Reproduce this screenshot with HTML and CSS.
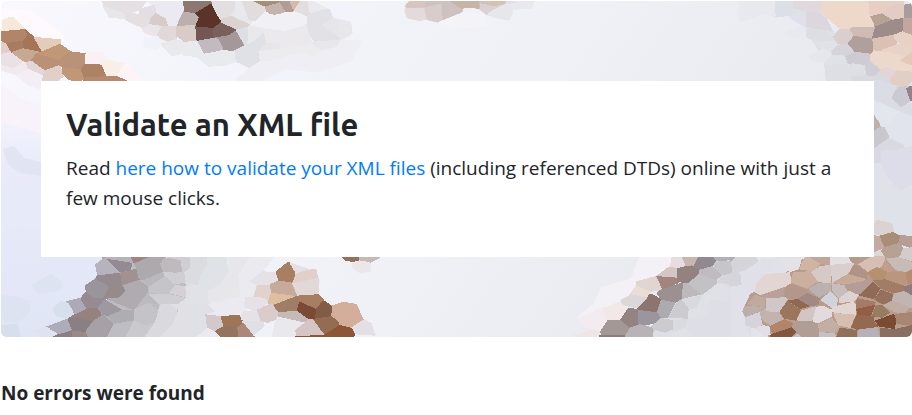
FILE: index.html
```html
<!DOCTYPE html>
<html lang="en">
<head>
<meta charset="utf-8">
<meta name="viewport" content="width=device-width, initial-scale=1">
<title>Validate an XML file</title>
<link rel="stylesheet" href="styles.css">
</head>
<body>
<main class="page">
<section class="hero">
<svg class="hero-art" viewBox="1 1 911 336" preserveAspectRatio="xMidYMid slice" aria-hidden="true">
<defs>
<linearGradient id="base" x1="0" y1="0" x2="1" y2="0.25">
<stop offset="0" stop-color="#f8f8fd"/><stop offset="0.3" stop-color="#f3f4fb"/><stop offset="0.6" stop-color="#f0f1f6"/><stop offset="0.9" stop-color="#e9eaef"/><stop offset="1" stop-color="#e3e4eb"/>
</linearGradient>
<linearGradient id="left" x1="0" y1="0" x2="0" y2="1">
<stop offset="0" stop-color="#f6f6fd"/><stop offset="0.3" stop-color="#e9ebfa"/><stop offset="1" stop-color="#e0e5f5"/>
</linearGradient>
<!-- Repeats every cell one pixel outwards so that neighbours meet without seams -->
<filter id="seams" x="0" y="0" width="1" height="1" color-interpolation-filters="sRGB">
<feOffset in="SourceGraphic" dx="1" dy="0" result="right"/>
<feOffset in="SourceGraphic" dx="-1" dy="0" result="leftward"/>
<feOffset in="SourceGraphic" dx="0" dy="1" result="down"/>
<feMerge><feMergeNode in="leftward"/><feMergeNode in="right"/><feMergeNode in="down"/><feMergeNode in="SourceGraphic"/></feMerge>
</filter>
</defs>
<rect x="0" y="0" width="914" height="338" fill="url(#base)"/>
<path fill="url(#left)" d="M0 95 45 105 120 257 70 338H0Z"/>
<path fill="#fdf9fc" d="M1 8 30 10 65 36 60 48 35 36 12 17 1 22Z"/>
<path fill="#f8f2fa" d="M1 85 20 98 41 108V134L1 122Z"/>
<path fill="#e1e4f2" d="M3 149 14 146 24 158 41 162V176L20 173 8 165Z"/>
<path fill="#e7eaf8" d="M1 195 20 185 41 194V230L14 224 1 235Z"/>
<g filter="url(#seams)" shape-rendering="crispEdges">
<g transform="scale(.3333)">
<path fill="#f7e8da" d="M9 60 35 50 75 87 9 92Z"/>
<path fill="#b08569" d="M3 94 75 87 82 105 70 122 18 129 3 120Z"/>
<path fill="#a87c61" d="M18 129 70 122 68 145 35 156Z"/>
<path fill="#a57559" d="M75 88 101 112 125 154 104 157 69 144 70 122 82 105Z"/>
<path fill="#e4ccba" d="M101 111 181 118 180 130 125 154Z"/>
<path fill="#e2cec7" d="M3 125 18 129 30 155 3 162Z"/>
<path fill="#c7a893" d="M35 156 69 145 120 155 92 181 76 185Z"/>
<path fill="#c09875" d="M125 154 179 132 210 154 176 180 106 160Z"/>
<path fill="#ba9177" d="M92 181 108 160 176 180 182 196 136 208Z"/>
<path fill="#b99378" d="M176 180 210 154 255 160 254 192 240 207 188 202Z"/>
<path fill="#c19877" d="M188 202 240 207 254 235 235 243 205 237 187 220Z"/>
<path fill="#ae8265" d="M252 193 300 193 320 228 295 243H254L243 208Z"/>
<path fill="#b48b72" d="M256 232 348 227 386 243H254Z"/>
<path fill="#f8efe7" d="M303 185 317 180 377 190 349 227 320 229Z"/>
<path fill="#fbf1f4" d="M255 162 298 155 315 167 318 180 300 193H255Z"/>
<path fill="#fcf4f6" d="M375 192 430 243H386L350 227Z"/>
<path fill="#e9e1e5" d="M3 162 31 155 71 185 38 205 3 191Z"/>
<path fill="#f0e9ef" d="M3 192 38 205 71 185 83 190 77 220 50 223 3 209Z"/>
<path fill="#e2d6d9" d="M77 187 94 182 133 210 125 223 84 205Z"/>
<path fill="#e1d0ca" d="M132 212 178 195 188 230 170 243H128Z"/>
<path fill="#f3edf5" d="M50 225 85 207 125 224 123 265 87 255Z"/>
<path fill="#e3dfe3" d="M310 3H383L392 13 371 39 325 33 311 15Z"/>
<path fill="#e6e6eb" d="M310 18 371 39 390 50 380 55 328 50Z"/>
<path fill="#e6e0e5" d="M383 3H438L421 27 390 38 371 39 392 13Z"/>
<path fill="#e5dfe0" d="M371 39 390 38 419 43 450 56 447 72 430 83 380 60Z"/>
<path fill="#e3dee3" d="M421 27 464 14 470 40 450 54 419 43Z"/>
<path fill="#d8ccca" d="M468 39 498 56 503 74 484 78 447 72 451 54Z"/>
<path fill="#ebe9f1" d="M440 3H548L550 34 530 76 503 74 498 56 470 40 464 14Z"/>
<path fill="#e9e5ea" d="M427 84 447 72 485 78 471 108 434 98Z"/>
<path fill="#e1d8d8" d="M485 78 529 77 528 120 505 124 470 108Z"/>
<path fill="#d9cbc7" d="M529 77 584 76 587 122 551 122 527 105Z"/>
<path fill="#bbb0ad" d="M550 34 584 40 597 53 590 76 530 76Z"/>
<path fill="#8f7771" d="M549 3H631L634 12 584 40 553 32Z"/>
<path fill="#5b3429" d="M631 12 662 67 640 84 586 79 597 50 584 40Z"/>
<path fill="#745752" d="M586 79 640 84 638 113 590 122Z"/>
<path fill="#7a605a" d="M662 66 708 89 685 106 638 114 640 84Z"/>
<path fill="#c3babf" d="M594 122 638 114 655 116 671 148 611 158Z"/>
<path fill="#a49998" d="M638 114 685 106 708 91 735 138 699 152 671 148 655 116Z"/>
<path fill="#e3dee0" d="M635 3H725L693 44 662 58 650 40Z"/>
<path fill="#dbd2d2" d="M662 58 693 46 750 74 743 82 703 86 664 68Z"/>
<path fill="#e7e8ec" d="M724 6 745 35 750 72 693 44Z"/>
<path fill="#e2dedf" d="M726 3H765L780 15V38L745 34Z"/>
<path fill="#e7e7ea" d="M745 36 780 39V77L750 72ZM743 85 780 79V140H735Z"/>
<path fill="#dddee3" d="M708 89 743 82 742 138 735 140Z"/>
<path fill="#dfe1e5" d="M702 151 737 139 780 150V180L750 202 711 182Z"/>
<path fill="#e9eaee" d="M541 152 565 122H591L610 158 600 168 550 165ZM590 168 671 149 704 155 706 184 670 195 625 197Z"/>
<path fill="#f0f2fb" d="M435 115 475 108 488 125 470 147 433 140Z"/>
<path fill="#e8e8ed" d="M481 131 527 118 555 126 541 162 515 165Z"/>
</g>

<g transform="translate(235 0) scale(.3333)">
<path fill="#eeeef4" d="M65 185 190 155 260 150 320 118 378 122 350 180 250 215 150 205 75 243H0L47 202Z"/>
<path fill="#f0f0f5" d="M45 75 65 45 90 35 145 43 182 33 214 48V72L150 92 84 85Z"/>
<path fill="#e7e9ed" d="M0 3H20L40 60 0 52Z"/>
<path fill="#e2dddd" d="M20 3H55L90 20 88 38 60 64 40 58Z"/>
<path fill="#dbd2d2" d="M0 55 45 75 37 82 0 87Z"/>
<path fill="#e9e9ed" d="M45 75 84 85V100L60 122 33 140 40 78Z"/>
<path fill="#dedfe4" d="M2 90 40 79 37 135 30 140Z"/>
<path fill="#dfe1e6" d="M0 150 60 122 84 98 95 130 68 155 73 185 47 202 6 184Z"/>
<path fill="#aa8c77" d="M53 3H137L134 8 90 20Z"/>
<path fill="#c3b5ae" d="M90 20 134 7 150 33 120 45 100 40Z"/>
<path fill="#b39c94" d="M134 5 165 3 174 33 150 34Z"/>
<path fill="#d5b8a5" d="M163 3H195L180 24 172 25Z"/>
<path fill="#e3dedd" d="M195 3H217L225 43 216 46 175 33Z"/>
<path fill="#e9e9ee" d="M217 3H230L277 26 225 40Z"/>
<path fill="#e1e1e6" d="M225 40 280 25 293 55 258 75 320 117 240 125 216 93V48Z"/>
<path fill="#e5e5ea" d="M258 75 293 53 311 66 305 102Z"/>
<path fill="#e8e7ec" d="M293 54 345 65 350 100 320 117 305 102 311 66Z"/>
<path fill="#e7e7ec" d="M240 125 318 118 307 140 265 150 230 130Z"/>
<path fill="#ebe9eb" d="M84 85 150 93 214 75 228 125 225 135 140 150 135 128 95 130Z"/>
<path fill="#e7e6eb" d="M70 153 95 130 135 127 139 151Z"/>
<path fill="#ecebf0" d="M70 154 225 135 262 150 235 170 190 157 110 182 75 185Z"/>
</g>

<g transform="translate(370 0) scale(.3333)">
<path fill="#d7c5c2" d="M120 3H170L163 22 104 22Z"/>
<path fill="#e3dbdb" d="M107 25 162 23 170 57 145 60 110 52Z"/>
<path fill="#d9cdcb" d="M162 23 215 10 217 57 203 65 170 57Z"/>
<path fill="#cfc1bf" d="M170 3H240L276 28 274 35 217 58 215 10 163 22Z"/>
<path fill="#c8b4a7" d="M240 3H327L329 23 284 21 275 25Z"/>
<path fill="#d6c1b5" d="M327 3H407L403 12 369 18 335 9Z"/>
<path fill="#d9d1d2" d="M328 9 369 18 399 15 367 30 350 42 328 25Z"/>
<path fill="#e7e6eb" d="M403 12 427 22 425 42 416 59 370 50 350 42 369 29Z"/>
<path fill="#dedee3" d="M407 3H440L443 9 412 8Z"/>
<path fill="#e9e8ee" d="M427 3H490L485 23 430 27 405 12 443 9Z"/>
<path fill="#f3f3f8" d="M211 65 276 37 343 43 350 78 245 83Z"/>
</g>

<g transform="translate(740 0) scale(.3333)">
<path fill="#dfdfe6" d="M158 24 247 37 300 136 320 165 332 243H260L255 185 196 78 150 50Z"/>
<path fill="#e7e9ee" d="M0 3H105V48L70 40 0 65ZM130 100 190 78 200 95 163 112Z"/>
<path fill="#dddfe6" d="M105 3H158L171 35 150 44 107 50Z"/>
<path fill="#e0d8dd" d="M158 3H247L240 37 197 34 158 24Z"/>
<path fill="#e0e0eb" d="M150 50 170 35 197 44 196 78 172 67Z"/>
<path fill="#dcd7de" d="M197 34 240 37 256 54 275 92 235 90 197 80Z"/>
<path fill="#dcdee4" d="M197 87 240 88 277 109 279 122 235 124 203 112Z"/>
<path fill="#dfe2e7" d="M234 127 280 121 300 136 272 156 250 147Z"/>
<path fill="#e6e7ed" d="M208 165 250 147 272 156 275 165 255 187 215 180Z"/>
<path fill="#edd8c9" d="M246 3H385L397 44 403 78 328 86 306 88 240 35Z"/>
<path fill="#dacfcf" d="M277 110 302 87 328 86 340 98 337 112 325 130 293 132Z"/>
<path fill="#d7d3da" d="M274 154 293 134 325 133 341 157 315 167 275 164Z"/>
<path fill="#cfbbb4" d="M328 86 340 80 402 82 397 115 341 107Z"/>
<path fill="#afa09b" d="M324 129 342 107 397 116 400 152 390 161 345 154Z"/>
<path fill="#b8a294" d="M391 49 425 40 455 58 447 69 405 80Z"/>
<path fill="#e9cfc3" d="M385 3H490V11L426 37 389 45Z"/>
<path fill="#e2ccc3" d="M426 38 455 15 490 10V54L457 58Z"/>
<path fill="#9d8c8a" d="M405 80 455 60 490 54V90L460 103 396 115Z"/>
<path fill="#aa9b9c" d="M491 15 516 10V54H491Z"/>
<path fill="#c3a69e" d="M490 55H516V103L490 92Z"/>
<path fill="#dbc1b4" d="M397 116 460 104 469 132 422 150 400 151Z"/>
<path fill="#e8d1c5" d="M460 105 486 94 516 105V139L482 130 462 115Z"/>
<path fill="#e9d2c8" d="M421 150 480 131 516 140V157L495 168 455 158Z"/>
<path fill="#edd9cb" d="M388 166 401 151 454 158 498 170 482 184 516 197V215L470 211 434 200 415 207 389 180Z"/>
<path fill="#e4c9ba" d="M478 182 516 156V197Z"/>
<path fill="#cfcbd3" d="M316 168 345 155 390 161 388 185 372 194 322 190Z"/>
<path fill="#d1cdd4" d="M374 190 390 182 421 209 400 229 379 225Z"/>
<path fill="#dcdfe4" d="M323 206 337 190 374 195 377 225 330 228Z"/>
<path fill="#dfe2e6" d="M255 185 275 165 313 168 320 193 300 200 256 192Z"/>
<path fill="#dedfe4" d="M258 195 322 191V220L332 243H260Z"/>
<path fill="#d9dae0" d="M334 230 379 225 400 230 414 217 450 238 480 270H402V243H335Z"/>
<path fill="#e3d5d7" d="M415 216 434 200 468 210 453 238Z"/>
<path fill="#e1cec5" d="M450 238 470 211 516 215V243L491 264 453 253Z"/>
</g>

<g transform="translate(860 70) scale(.3333)">
<path fill="#dbdce4" d="M42 30H60L125 52 98 73 97 87 120 111 156 100V137L105 122 42 90Z"/>
<path fill="#cbcad2" d="M98 73 112 52 145 48 151 91 121 111 97 85Z"/>
<path fill="#92838b" d="M138 55 156 47V91H150Z"/>
<path fill="#e4e6ee" d="M42 90 120 125 111 160 78 172 42 135Z"/>
<path fill="#c1afa8" d="M42 132 61 172 42 182Z"/>
<path fill="#cac8cf" d="M42 183 60 170 78 173 89 204 60 239 42 235Z"/>
<path fill="#d9dae1" d="M42 235 86 204 140 220 128 237 62 239 60 275 42 280Z"/>
<path fill="#e1e3ed" d="M75 173 118 125 156 137V230H140L89 203Z"/>
<path fill="#dcdde8" d="M63 243 127 237 156 228V345L120 362 82 325 63 277Z"/>
<path fill="#e0e2e9" d="M42 280 62 278 82 325 120 362 156 345V494L121 498 103 488 98 459 42 450Z"/>
</g>

<g transform="translate(0 240) scale(.3333)">
<path fill="#dee3f2" d="M3 165 45 170 90 185 85 220 50 250 3 235ZM95 135 155 103 185 128 180 150 115 160Z"/>
<path fill="#d8dfec" d="M3 255 50 252 60 291H15L3 281ZM160 203 185 184 207 190 221 217 205 235 170 227Z"/>
<path fill="#dee3f2" d="M100 272 145 260 165 291H125Z"/>
<path fill="#bebcc2" d="M402 55H560V180L480 291H300L300 200 380 130Z"/>
<path fill="#aaa5ae" d="M311 51H340L395 65 388 93 360 98 294 105Z"/>
<path fill="#b7b3be" d="M315 54 360 98 294 105 288 73Z"/>
<path fill="#948a92" d="M319 56 398 66 389 92 360 97Z"/>
<path fill="#b7b3b7" d="M316 51H391L400 69 318 56Z"/>
<path fill="#a08580" d="M391 51H450L446 62 402 71Z"/>
<path fill="#958a90" d="M294 106 360 98 366 135 325 140 286 120Z"/>
<path fill="#9a949b" d="M256 137 287 117 325 138 309 171 280 174 260 153Z"/>
<path fill="#a19190" d="M360 98 389 92 408 85 419 119 366 136Z"/>
<path fill="#978a8b" d="M311 175 327 139 367 136 376 152 359 173Z"/>
<path fill="#adaaad" d="M401 71 447 51H497L480 70 489 95 432 120 417 118 408 85Z"/>
<path fill="#b0abb0" d="M367 136 417 119 444 139V158L401 211 318 176 359 172 376 152Z"/>
<path fill="#bfbabd" d="M480 70 497 53 542 61 546 91 527 98 489 94Z"/>
<path fill="#bab8bb" d="M430 121 488 96 494 109 446 140Z"/>
<path fill="#c5c4c8" d="M447 140 494 109 524 133 507 164 446 158Z"/>
<path fill="#cfced2" d="M497 51H600V66L551 94 546 91 542 61ZM489 96 527 98 560 92 556 128 523 133 494 108Z"/>
<path fill="#dbdbe0" d="M553 95 600 64V139L557 137Z"/>
<path fill="#d5d0d8" d="M508 160 524 135 557 138 558 173Z"/>
<path fill="#968b93" d="M259 155 280 174 312 174 293 204 261 206 240 181Z"/>
<path fill="#9e98a0" d="M293 203 313 177 368 210 322 228 307 224Z"/>
<path fill="#acaab7" d="M202 184 240 174 259 206 224 221Z"/>
<path fill="#95817e" d="M222 225 262 205 291 204 307 224 279 243 252 270 202 236Z"/>
<path fill="#8b7f86" d="M202 236 224 232 278 245 257 276 216 272Z"/>
<path fill="#aeacb9" d="M141 260 202 237 216 272 185 285Z"/>
<path fill="#8c7e84" d="M160 288 216 271V291H160Z"/>
<path fill="#998a88" d="M216 272 257 276 264 291H216Z"/>
<path fill="#a7a1a5" d="M257 273 279 243 307 224 319 230 341 253 337 272 321 291H264Z"/>
<path fill="#aeadb1" d="M320 229 366 211 402 211V241L341 252Z"/>
<path fill="#bebdc4" d="M321 291 341 252 403 241 399 254 377 291Z"/>
<path fill="#c4c3c8" d="M401 211 443 187 475 210 464 248 432 257 401 241Z"/>
<path fill="#bbbac0" d="M401 209 447 160 480 195 443 189Z"/>
<path fill="#cfced3" d="M447 162 508 162 558 174 537 191 477 194Z"/>
<path fill="#cac9cd" d="M377 291 401 241 432 257 465 247 433 291Z"/>
<path fill="#dad9df" d="M475 209 480 194 510 190 534 210 518 252 480 291H433L465 247Z"/>
<path fill="#e0e0e5" d="M556 137H600V291H480L520 250 535 210 510 192 537 191 558 173Z"/>
</g>

<g transform="translate(190 240) scale(.3333)">
<path fill="#ebeaf0" d="M110 51H250L217 94 190 170 165 215 92 228 75 274 92 291H20V200L110 160Z"/>
<path fill="#dadce0" d="M0 51H50L53 72 30 105 25 137 0 130Z"/>
<path fill="#dfe2e7" d="M50 51 108 51 117 93 92 130 55 150 25 137 31 103 53 72Z"/>
<path fill="#e1e2e7" d="M0 130 25 137 55 150 60 190 20 215 0 207Z"/>
<path fill="#e6e6eb" d="M117 51H180L145 105 150 170 55 190V150L91 134 117 93Z"/>
<path fill="#dfe1e7" d="M0 195 50 190 75 215 46 223 51 263 20 291H0Z"/>
<path fill="#e5e1e5" d="M176 125 217 94 259 97 265 121 240 132 200 135Z"/>
<path fill="#a97f62" d="M257 97 296 66 317 99 304 126 266 123Z"/>
<path fill="#e4e0e3" d="M300 68 357 88 317 101Z"/>
<path fill="#e1cfca" d="M317 101 345 91 376 87 382 116 307 131Z"/>
<path fill="#e2d8d7" d="M307 130 382 114 386 123 382 164 323 166Z"/>
<path fill="#c6aa9a" d="M240 132 266 122 304 127 322 167 243 158Z"/>
<path fill="#e1d2cd" d="M201 135 240 134 243 159 233 182 190 170Z"/>
<path fill="#dfbd9f" d="M243 158 318 168 252 194 233 188Z"/>
<path fill="#a07d67" d="M252 194 320 168 329 183 321 213 264 217Z"/>
<path fill="#a97d62" d="M320 167 382 163 399 180 378 206 329 184Z"/>
<path fill="#7b4a34" d="M327 184 377 206 375 234 358 238 321 213Z"/>
<path fill="#835c46" d="M379 206 399 181 426 200 423 228 375 234Z"/>
<path fill="#d2ae9b" d="M426 197 462 186 497 192 518 239 484 262 444 253 424 229Z"/>
<path fill="#946b53" d="M369 237 424 228 447 246 444 260 405 283Z"/>
<path fill="#8d5537" d="M403 284 449 255 491 265 496 279 488 291H315V289Z"/>
<path fill="#d5c6c5" d="M316 269 356 238 369 238 403 284 319 289Z"/>
<path fill="#c6bab8" d="M262 229 264 216 321 213 356 238 330 249Z"/>
<path fill="#d9cccb" d="M201 209 245 190 264 216 260 235 232 246 211 239Z"/>
<path fill="#e6e1e6" d="M165 170 222 173 235 187 201 209 162 202ZM155 215 200 210 211 240 179 246 154 236Z"/>
<path fill="#e0dfe5" d="M156 244 219 243 221 258 190 285 160 248Z"/>
<path fill="#e9e8ed" d="M249 288 261 229 310 240 345 248 316 269 315 291Z"/>
<path fill="#d4c9ca" d="M46 223 92 228 98 257 76 274 51 263Z"/>
<path fill="#9e7557" d="M92 228 145 225 156 244 145 264 100 256Z"/>
<path fill="#94735f" d="M75 273 102 257 142 261 144 291H92Z"/>
<path fill="#aa8978" d="M142 262 160 248 194 291H144Z"/>
<path fill="#e3dfe4" d="M484 262 520 239 541 249 554 284 495 280Z"/>
<path fill="#986f5b" d="M456 51H508V58L490 63 468 60Z"/>
<path fill="#c8b9b5" d="M508 51H571L540 66 508 58Z"/>
<path fill="#eae7eb" d="M489 70 508 61 540 67 539 92 510 97 489 84Z"/>
</g>

<g transform="translate(560 240) scale(.3333)">
<path fill="#dedfe6" d="M465 62 570 51V291H270L345 190 430 130Z"/>
<path fill="#f3f0f6" d="M240 51H335L330 77 290 107 229 124 206 166 183 179 126 204 50 235 105 190 125 142 215 115Z"/>
<path fill="#f4ebf0" d="M50 235 130 201 141 240 121 272 75 258Z"/>
<path fill="#eee5e6" d="M45 285 95 269 122 275 115 291H45Z"/>
<path fill="#e7dcdf" d="M335 51H364L377 75 352 82 330 77Z"/>
<path fill="#cbb5b0" d="M364 51H416L399 76 376 75Z"/>
<path fill="#928890" d="M414 51H461L469 66 453 84 418 89 401 76Z"/>
<path fill="#b2b0b4" d="M461 51H529L520 60 469 64Z"/>
<path fill="#d5c6c3" d="M290 107 327 80 352 84 349 115Z"/>
<path fill="#948280" d="M351 84 395 76 418 89 416 104 386 129 352 122Z"/>
<path fill="#a2867e" d="M288 108 351 113 353 128 306 146Z"/>
<path fill="#e1d5d4" d="M229 124 288 108 306 146 272 153 232 141Z"/>
<path fill="#e9ddd5" d="M206 166 232 138 274 155 255 172Z"/>
<path fill="#9c9192" d="M303 149 369 128 365 182 352 188 302 175 292 159Z"/>
<path fill="#bdb8bb" d="M369 129 383 130 430 162 365 177Z"/>
<path fill="#c2c1c5" d="M384 130 420 99 471 122 470 131 427 165Z"/>
<path fill="#c0bbc0" d="M418 89 459 78 487 107 468 121 419 102Z"/>
<path fill="#c6c5ca" d="M465 65 519 62 525 83 515 99 487 106 461 80Z"/>
<path fill="#d6d5db" d="M520 60 548 51H570V99L543 96 547 133 520 137 472 127 487 107 516 99Z"/>
<path fill="#dcd6d9" d="M183 179 215 163 260 173 232 202 187 193Z"/>
<path fill="#f2e8e7" d="M126 204 185 189 204 205 180 240 141 239Z"/>
<path fill="#8e7470" d="M234 207 273 161 303 179 294 215Z"/>
<path fill="#948383" d="M179 241 204 204 234 207 234 252 206 263Z"/>
<path fill="#9b969e" d="M235 210 292 217 303 234 280 250 234 253Z"/>
<path fill="#aeabb0" d="M303 179 347 188 324 234 303 234 291 216Z"/>
<path fill="#cbcbd0" d="M347 190 365 176 386 206 384 236 326 234Z"/>
<path fill="#a39896" d="M121 274 142 241 180 239 209 264 194 286 125 282Z"/>
<path fill="#8c7d7e" d="M119 284 195 286V291H115Z"/>
<path fill="#b7b3b7" d="M194 289 210 263 240 253 279 263 278 291H194Z"/>
<path fill="#cccbd0" d="M277 258 303 234 340 240 338 269 315 278 280 269Z"/>
<path fill="#d8dae0" d="M340 240 383 237 376 262 340 277ZM365 178 427 166 411 205 386 207Z"/>
<path fill="#dfe1e7" d="M384 236 386 207 411 204 426 166 475 130 511 150 502 184 450 178 443 225ZM340 275 375 263 400 291H325Z"/>
</g>

<g transform="translate(730 210) scale(.3333)">
<path fill="#e1e2e9" d="M50 160 143 141H300L180 190 80 240 37 305 60 381H0V230Z"/>
<path fill="#b99d8c" d="M215 148 240 141H546V381H120L37 305 60 253 170 186Z"/>
<path fill="#b0adb1" d="M0 141H18L12 153 0 156Z"/>
<path fill="#d4d4da" d="M0 156 18 141H75L85 155 61 182 10 184ZM0 190 32 191 35 225 0 230Z"/>
<path fill="#e0e1e8" d="M35 188 85 155 102 145 143 152 107 192 77 222 76 249 37 225Z"/>
<path fill="#dad3d2" d="M432 44 442 30 487 39 490 67 448 74 432 68Z"/>
<path fill="#aa8d77" d="M449 77 488 66 510 77 501 103 463 111Z"/>
<path fill="#b89d97" d="M511 74 546 79V112L505 99Z"/>
<path fill="#c4aaa0" d="M432 76 449 79 463 111 432 124Z"/>
<path fill="#b6a195" d="M456 124 463 111 505 99 520 116 504 142 462 136Z"/>
<path fill="#d4cccc" d="M520 114 546 112V154L508 143Z"/>
<path fill="#e0d6d4" d="M432 127 450 123 463 141H432Z"/>
<path fill="#d0b5a5" d="M207 178 222 143 237 141 273 161 249 184Z"/>
<path fill="#c0a69a" d="M237 141H299L300 167 272 162Z"/>
<path fill="#e3dfe2" d="M300 141H356L366 160 301 167Z"/>
<path fill="#b39a89" d="M358 141H388L383 160H366Z"/>
<path fill="#e5e2e7" d="M142 149 217 143 207 178 180 187Z"/>
<path fill="#e3d6d2" d="M77 222 107 192 180 187 185 219 162 233 91 255 76 248Z"/>
<path fill="#cbb09f" d="M181 217 189 187 247 183 265 215 230 236Z"/>
<path fill="#d6c9c7" d="M243 186 271 167 303 166 304 219 265 217Z"/>
<path fill="#d9cfcf" d="M301 165 374 158 356 190 307 218Z"/>
<path fill="#b09384" d="M356 190 375 163 414 187 409 212 370 201Z"/>
<path fill="#d8bfb6" d="M383 162 432 137H463L465 149 455 171 415 187Z"/>
<path fill="#c8bab5" d="M466 144 505 142 546 155V177L529 186 496 181Z"/>
<path fill="#b5916f" d="M412 187 440 171 473 186 463 208 432 214Z"/>
<path fill="#c29f8b" d="M459 170 466 152 491 181 474 189Z"/>
<path fill="#ba967f" d="M465 208 474 187 527 187 530 226Z"/>
<path fill="#b78a73" d="M529 187 546 179V224L530 223Z"/>
<path fill="#c8aa99" d="M307 218 354 192 409 207 400 214 342 224Z"/>
<path fill="#b49d98" d="M342 224 411 213 428 214 388 254Z"/>
<path fill="#906a54" d="M386 256 430 214 451 236 432 268Z"/>
<path fill="#a27c65" d="M430 211 465 208 525 228 520 244 490 250 451 236Z"/>
<path fill="#93715c" d="M432 269 452 238 489 252 486 274 459 284Z"/>
<path fill="#8f7b7d" d="M523 229 546 222V256L522 243Z"/>
<path fill="#c1b4b1" d="M491 252 522 243 546 256V295L486 274Z"/>
<path fill="#b9a098" d="M91 255 162 232V262L105 266Z"/>
<path fill="#b2978a" d="M162 263 167 230 180 221 235 240 230 255 203 268Z"/>
<path fill="#a28984" d="M202 267 233 248 270 266 264 286 239 289Z"/>
<path fill="#bbb1b1" d="M234 237 266 218 305 219 303 244 267 263Z"/>
<path fill="#c7bdbe" d="M305 219 342 226 355 246 327 264 308 248Z"/>
<path fill="#d3d1d9" d="M270 270 302 244 325 266 320 289 304 293Z"/>
<path fill="#ddd2d0" d="M327 265 358 242 388 256 372 275 328 279Z"/>
<path fill="#c0aaa0" d="M49 285 75 253 104 265V291L58 286Z"/>
<path fill="#d0c8c6" d="M108 264 167 262 173 268 150 306 108 305Z"/>
<path fill="#8e6850" d="M172 272 203 267 240 289 210 297Z"/>
<path fill="#9c755d" d="M147 307 172 272 213 300 198 332 162 326Z"/>
<path fill="#bcafaa" d="M37 305 43 287 104 291 89 305 45 322Z"/>
<path fill="#c3b3ae" d="M89 306 108 292V304L149 307 162 327 121 347 90 325Z"/>
<path fill="#d2c5c3" d="M201 326 213 302 259 288 247 333 205 333Z"/>
<path fill="#e2dade" d="M247 335 258 291 278 287 309 300 305 320 264 341Z"/>
<path fill="#e1d6d1" d="M303 292 370 275 379 286V314L312 309Z"/>
<path fill="#d8beae" d="M309 309 378 314 361 354 325 347Z"/>
<path fill="#a67a64" d="M380 264 438 276 434 287 378 297Z"/>
<path fill="#925e45" d="M379 297 437 284 423 318 381 315Z"/>
<path fill="#967d62" d="M425 318 438 286 459 286 481 307 457 324Z"/>
<path fill="#c2ada5" d="M458 287 484 273 541 292 523 311 493 306Z"/>
<path fill="#7a4a33" d="M434 332 491 312 501 322 494 357 447 350Z"/>
<path fill="#a78773" d="M494 312 546 306V348L500 342Z"/>
<path fill="#94694f" d="M363 352 379 314 434 319 432 332 447 352 383 360Z"/>
<path fill="#b7b0b6" d="M383 359 443 351 450 381H383Z"/>
<path fill="#8b6e62" d="M451 354 495 357 546 345V381H450Z"/>
<path fill="#93705b" d="M318 381 329 353 381 360V381Z"/>
<path fill="#c2aea5" d="M264 342 304 321 330 353 315 369 267 365Z"/>
<path fill="#b09d96" d="M188 356 205 333 249 334 265 347 263 381H205Z"/>
<path fill="#b18569" d="M119 348 163 328 191 339 185 352 127 372Z"/>
<path fill="#80583f" d="M122 373 185 352 201 366 185 381H120Z"/>
<path fill="#d7d3da" d="M45 322 89 306 98 345 79 353 46 346Z"/>
<path fill="#e2dfe4" d="M78 354 98 345 119 350 122 375 105 379Z"/>
<path fill="#c6bfc3" d="M188 381 204 370 215 381ZM266 366 315 370 318 381H266Z"/>
</g>
</g>
</svg>
<div class="card">
<h1 class="title">Validate an XML file</h1>
<p class="lead">Read <a class="link" href="#validate">here how to validate your XML files</a> (including referenced DTDs) online with just a few mouse clicks.</p>
</div>
</section>
<h2 class="result">No errors were found</h2>
</main>
</body>
</html>
```

FILE: styles.css
```css
* {
  box-sizing: border-box;
}

body {
  margin: 0;
  background: #fff;
  color: #212529;
  font-family: "Segoe UI", "Open Sans", "Noto Sans", sans-serif;
  font-size: 19px;
  line-height: 30px;
}

.page {
  padding: 1px 0 0 1px;
}

.hero {
  position: relative;
  overflow: hidden;
  padding: 80px 38px 80px 40px;
  border-radius: 6px;
}

.hero-art {
  position: absolute;
  inset: 0;
  width: 100%;
  height: 100%;
}

.card {
  position: relative;
  padding: 24px 25px 44px;
  background: #fff;
}

.title {
  margin: 0 0 8px;
  font-family: Ubuntu, "Noto Sans", sans-serif;
  font-size: 31px;
  font-weight: 700;
  line-height: 40px;
}

.lead {
  margin: 0;
}

.link {
  color: #007bff;
  text-decoration: none;
}

.result {
  margin: 41px 0 0;
  font-size: 19px;
  font-weight: 700;
  line-height: 30px;
}
```
